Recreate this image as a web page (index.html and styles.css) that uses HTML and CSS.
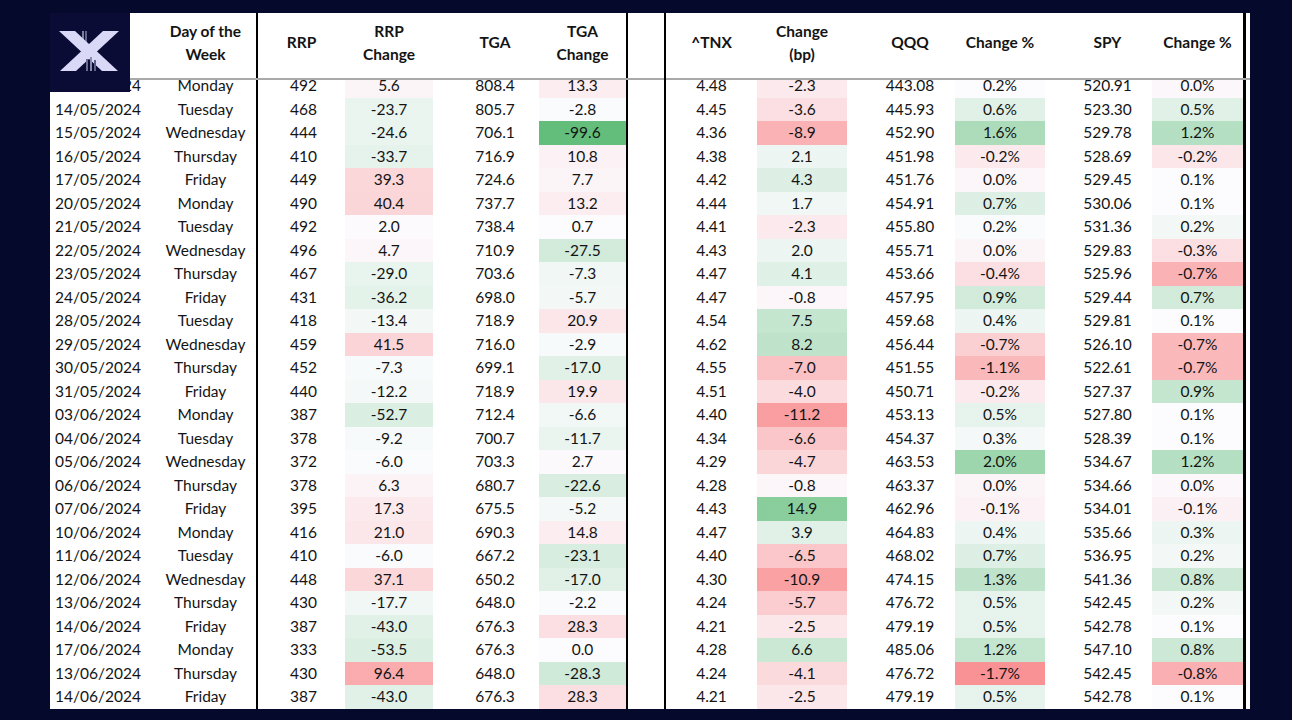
FILE: index.html
```html
<!DOCTYPE html>
<html lang="en">
<head>
<meta charset="utf-8">
<title>RRP / TGA vs Markets</title>
<link rel="stylesheet" href="styles.css">
</head>
<body>
<div class="sheet">
  <div class="logo">
    <svg viewBox="0 0 80 79" width="80" height="79">
      <rect x="32" y="18" width="2" height="13" fill="#7d7f9c"/>
      <rect x="35" y="18" width="2" height="11" fill="#62648a"/>
      <polygon points="9,18 25,18 68,58 52,58" fill="#d9d8f6"/>
      <polygon points="53,18 69,18 26,58 10,58" fill="#d9d8f6"/>
      <rect x="36" y="46" width="2" height="12" fill="#6a6c90"/>
      <rect x="40" y="44" width="2" height="14" fill="#8a8cab"/>
      <rect x="44" y="47" width="2" height="11" fill="#5d5f84"/>
    </svg>
  </div>

  <div class="panel left">
    <div class="row head">
      <div></div><div>Day of the<br>Week</div><div>RRP</div><div>RRP<br>Change</div><div class="sh">TGA</div><div>TGA<br>Change</div>
    </div>
    <div class="body"><div class="rows">
      <div class="row"><div class="date">13/05/2024</div><div>Monday</div><div class="n">492</div><div class="r" style="--a:.05">5.6</div><div class="sh">808.4</div><div class="r" style="--a:.10">13.3</div></div>
      <div class="row"><div class="date">14/05/2024</div><div>Tuesday</div><div class="n">468</div><div class="g" style="--a:.12">-23.7</div><div class="sh">805.7</div><div class="g" style="--a:.02">-2.8</div></div>
      <div class="row"><div class="date">15/05/2024</div><div>Wednesday</div><div class="n">444</div><div class="g" style="--a:.12">-24.6</div><div class="sh">706.1</div><div class="g" style="--a:1">-99.6</div></div>
      <div class="row"><div class="date">16/05/2024</div><div>Thursday</div><div class="n">410</div><div class="g" style="--a:.15">-33.7</div><div class="sh">716.9</div><div class="r" style="--a:.07">10.8</div></div>
      <div class="row"><div class="date">17/05/2024</div><div>Friday</div><div class="n">449</div><div class="r" style="--a:.25">39.3</div><div class="sh">724.6</div><div class="r" style="--a:.05">7.7</div></div>
      <div class="row"><div class="date">20/05/2024</div><div>Monday</div><div class="n">490</div><div class="r" style="--a:.26">40.4</div><div class="sh">737.7</div><div class="r" style="--a:.10">13.2</div></div>
      <div class="row"><div class="date">21/05/2024</div><div>Tuesday</div><div class="n">492</div><div class="r" style="--a:.01">2.0</div><div class="sh">738.4</div><div class="r" style="--a:0">0.7</div></div>
      <div class="row"><div class="date">22/05/2024</div><div>Wednesday</div><div class="n">496</div><div class="r" style="--a:.04">4.7</div><div class="sh">710.9</div><div class="g" style="--a:.28">-27.5</div></div>
      <div class="row"><div class="date">23/05/2024</div><div>Thursday</div><div class="n">467</div><div class="g" style="--a:.13">-29.0</div><div class="sh">703.6</div><div class="g" style="--a:.08">-7.3</div></div>
      <div class="row"><div class="date">24/05/2024</div><div>Friday</div><div class="n">431</div><div class="g" style="--a:.16">-36.2</div><div class="sh">698.0</div><div class="g" style="--a:.06">-5.7</div></div>
      <div class="row"><div class="date">28/05/2024</div><div>Tuesday</div><div class="n">418</div><div class="g" style="--a:.06">-13.4</div><div class="sh">718.9</div><div class="r" style="--a:.15">20.9</div></div>
      <div class="row"><div class="date">29/05/2024</div><div>Wednesday</div><div class="n">459</div><div class="r" style="--a:.27">41.5</div><div class="sh">716.0</div><div class="g" style="--a:.03">-2.9</div></div>
      <div class="row"><div class="date">30/05/2024</div><div>Thursday</div><div class="n">452</div><div class="g" style="--a:.03">-7.3</div><div class="sh">699.1</div><div class="g" style="--a:.18">-17.0</div></div>
      <div class="row"><div class="date">31/05/2024</div><div>Friday</div><div class="n">440</div><div class="g" style="--a:.05">-12.2</div><div class="sh">718.9</div><div class="r" style="--a:.14">19.9</div></div>
      <div class="row"><div class="date">03/06/2024</div><div>Monday</div><div class="n">387</div><div class="g" style="--a:.22">-52.7</div><div class="sh">712.4</div><div class="g" style="--a:.07">-6.6</div></div>
      <div class="row"><div class="date">04/06/2024</div><div>Tuesday</div><div class="n">378</div><div class="g" style="--a:.04">-9.2</div><div class="sh">700.7</div><div class="g" style="--a:.12">-11.7</div></div>
      <div class="row"><div class="date">05/06/2024</div><div>Wednesday</div><div class="n">372</div><div class="g" style="--a:.02">-6.0</div><div class="sh">703.3</div><div class="r" style="--a:.02">2.7</div></div>
      <div class="row"><div class="date">06/06/2024</div><div>Thursday</div><div class="n">378</div><div class="r" style="--a:.06">6.3</div><div class="sh">680.7</div><div class="g" style="--a:.23">-22.6</div></div>
      <div class="row"><div class="date">07/06/2024</div><div>Friday</div><div class="n">395</div><div class="r" style="--a:.12">17.3</div><div class="sh">675.5</div><div class="g" style="--a:.05">-5.2</div></div>
      <div class="row"><div class="date">10/06/2024</div><div>Monday</div><div class="n">416</div><div class="r" style="--a:.14">21.0</div><div class="sh">690.3</div><div class="r" style="--a:.10">14.8</div></div>
      <div class="row"><div class="date">11/06/2024</div><div>Tuesday</div><div class="n">410</div><div class="g" style="--a:.02">-6.0</div><div class="sh">667.2</div><div class="g" style="--a:.24">-23.1</div></div>
      <div class="row"><div class="date">12/06/2024</div><div>Wednesday</div><div class="n">448</div><div class="r" style="--a:.25">37.1</div><div class="sh">650.2</div><div class="g" style="--a:.18">-17.0</div></div>
      <div class="row"><div class="date">13/06/2024</div><div>Thursday</div><div class="n">430</div><div class="g" style="--a:.08">-17.7</div><div class="sh">648.0</div><div class="g" style="--a:.02">-2.2</div></div>
      <div class="row"><div class="date">14/06/2024</div><div>Friday</div><div class="n">387</div><div class="g" style="--a:.18">-43.0</div><div class="sh">676.3</div><div class="r" style="--a:.20">28.3</div></div>
      <div class="row"><div class="date">17/06/2024</div><div>Monday</div><div class="n">333</div><div class="g" style="--a:.22">-53.5</div><div class="sh">676.3</div><div class="r" style="--a:0">0.0</div></div>
      <div class="row"><div class="date">13/06/2024</div><div>Thursday</div><div class="n">430</div><div class="r" style="--a:.55">96.4</div><div class="sh">648.0</div><div class="g" style="--a:.29">-28.3</div></div>
      <div class="row"><div class="date">14/06/2024</div><div>Friday</div><div class="n">387</div><div class="g" style="--a:.18">-43.0</div><div class="sh">676.3</div><div class="r" style="--a:.20">28.3</div></div>
    </div></div>
  </div>

  <div class="gap">
    <div class="gap-head"></div>
  </div>

  <div class="panel right">
    <div class="row head">
      <div>^TNX</div><div>Change<br>(bp)</div><div class="sh">QQQ</div><div>Change %</div><div class="sh">SPY</div><div>Change %</div>
    </div>
    <div class="body"><div class="rows">
      <div class="row"><div>4.48</div><div class="r" style="--a:.12">-2.3</div><div class="sh">443.08</div><div class="g" style="--a:0">0.2%</div><div class="sh">520.91</div><div class="r" style="--a:.03">0.0%</div></div>
      <div class="row"><div>4.45</div><div class="r" style="--a:.20">-3.6</div><div class="sh">445.93</div><div class="g" style="--a:.18">0.6%</div><div class="sh">523.30</div><div class="g" style="--a:.18">0.5%</div></div>
      <div class="row"><div>4.36</div><div class="r" style="--a:.50">-8.9</div><div class="sh">452.90</div><div class="g" style="--a:.52">1.6%</div><div class="sh">529.78</div><div class="g" style="--a:.46">1.2%</div></div>
      <div class="row"><div>4.38</div><div class="g" style="--a:.10">2.1</div><div class="sh">451.98</div><div class="r" style="--a:.12">-0.2%</div><div class="sh">528.69</div><div class="r" style="--a:.15">-0.2%</div></div>
      <div class="row"><div>4.42</div><div class="g" style="--a:.20">4.3</div><div class="sh">451.76</div><div class="r" style="--a:.04">0.0%</div><div class="sh">529.45</div><div class="g" style="--a:0">0.1%</div></div>
      <div class="row"><div>4.44</div><div class="g" style="--a:.08">1.7</div><div class="sh">454.91</div><div class="g" style="--a:.20">0.7%</div><div class="sh">530.06</div><div class="g" style="--a:0">0.1%</div></div>
      <div class="row"><div>4.41</div><div class="r" style="--a:.12">-2.3</div><div class="sh">455.80</div><div class="g" style="--a:.02">0.2%</div><div class="sh">531.36</div><div class="g" style="--a:.06">0.2%</div></div>
      <div class="row"><div>4.43</div><div class="g" style="--a:.10">2.0</div><div class="sh">455.71</div><div class="r" style="--a:.05">0.0%</div><div class="sh">529.83</div><div class="r" style="--a:.20">-0.3%</div></div>
      <div class="row"><div>4.47</div><div class="g" style="--a:.19">4.1</div><div class="sh">453.66</div><div class="r" style="--a:.20">-0.4%</div><div class="sh">525.96</div><div class="r" style="--a:.50">-0.7%</div></div>
      <div class="row"><div>4.47</div><div class="r" style="--a:.04">-0.8</div><div class="sh">457.95</div><div class="g" style="--a:.28">0.9%</div><div class="sh">529.44</div><div class="g" style="--a:.28">0.7%</div></div>
      <div class="row"><div>4.54</div><div class="g" style="--a:.36">7.5</div><div class="sh">459.68</div><div class="g" style="--a:.10">0.4%</div><div class="sh">529.81</div><div class="g" style="--a:0">0.1%</div></div>
      <div class="row"><div>4.62</div><div class="g" style="--a:.40">8.2</div><div class="sh">456.44</div><div class="r" style="--a:.30">-0.7%</div><div class="sh">526.10</div><div class="r" style="--a:.46">-0.7%</div></div>
      <div class="row"><div>4.55</div><div class="r" style="--a:.40">-7.0</div><div class="sh">451.55</div><div class="r" style="--a:.46">-1.1%</div><div class="sh">522.61</div><div class="r" style="--a:.46">-0.7%</div></div>
      <div class="row"><div>4.51</div><div class="r" style="--a:.22">-4.0</div><div class="sh">450.71</div><div class="r" style="--a:.12">-0.2%</div><div class="sh">527.37</div><div class="g" style="--a:.36">0.9%</div></div>
      <div class="row"><div>4.40</div><div class="r" style="--a:.64">-11.2</div><div class="sh">453.13</div><div class="g" style="--a:.14">0.5%</div><div class="sh">527.80</div><div class="g" style="--a:0">0.1%</div></div>
      <div class="row"><div>4.34</div><div class="r" style="--a:.37">-6.6</div><div class="sh">454.37</div><div class="g" style="--a:.05">0.3%</div><div class="sh">528.39</div><div class="g" style="--a:0">0.1%</div></div>
      <div class="row"><div>4.29</div><div class="r" style="--a:.26">-4.7</div><div class="sh">463.53</div><div class="g" style="--a:.62">2.0%</div><div class="sh">534.67</div><div class="g" style="--a:.46">1.2%</div></div>
      <div class="row"><div>4.28</div><div class="r" style="--a:.04">-0.8</div><div class="sh">463.37</div><div class="r" style="--a:.05">0.0%</div><div class="sh">534.66</div><div class="r" style="--a:.03">0.0%</div></div>
      <div class="row"><div>4.43</div><div class="g" style="--a:.75">14.9</div><div class="sh">462.96</div><div class="r" style="--a:.07">-0.1%</div><div class="sh">534.01</div><div class="r" style="--a:.08">-0.1%</div></div>
      <div class="row"><div>4.47</div><div class="g" style="--a:.18">3.9</div><div class="sh">464.83</div><div class="g" style="--a:.10">0.4%</div><div class="sh">535.66</div><div class="g" style="--a:.10">0.3%</div></div>
      <div class="row"><div>4.40</div><div class="r" style="--a:.36">-6.5</div><div class="sh">468.02</div><div class="g" style="--a:.20">0.7%</div><div class="sh">536.95</div><div class="g" style="--a:.06">0.2%</div></div>
      <div class="row"><div>4.30</div><div class="r" style="--a:.62">-10.9</div><div class="sh">474.15</div><div class="g" style="--a:.40">1.3%</div><div class="sh">541.36</div><div class="g" style="--a:.31">0.8%</div></div>
      <div class="row"><div>4.24</div><div class="r" style="--a:.32">-5.7</div><div class="sh">476.72</div><div class="g" style="--a:.14">0.5%</div><div class="sh">542.45</div><div class="g" style="--a:.06">0.2%</div></div>
      <div class="row"><div>4.21</div><div class="r" style="--a:.14">-2.5</div><div class="sh">479.19</div><div class="g" style="--a:.14">0.5%</div><div class="sh">542.78</div><div class="g" style="--a:0">0.1%</div></div>
      <div class="row"><div>4.28</div><div class="g" style="--a:.32">6.6</div><div class="sh">485.06</div><div class="g" style="--a:.37">1.2%</div><div class="sh">547.10</div><div class="g" style="--a:.31">0.8%</div></div>
      <div class="row"><div>4.24</div><div class="r" style="--a:.23">-4.1</div><div class="sh">476.72</div><div class="r" style="--a:.72">-1.7%</div><div class="sh">542.45</div><div class="r" style="--a:.52">-0.8%</div></div>
      <div class="row"><div>4.21</div><div class="r" style="--a:.14">-2.5</div><div class="sh">479.19</div><div class="g" style="--a:.14">0.5%</div><div class="sh">542.78</div><div class="g" style="--a:0">0.1%</div></div>
    </div></div>
  </div>

  <div class="tail">
    <div class="gap-head"></div>
  </div>
</div>
</body>
</html>
```

FILE: styles.css
```css
* { box-sizing: border-box; }

html, body {
  margin: 0;
  background: #050a2d;
}

body {
  padding: 13px 0 0 50px;
  font-family: Lato, "Liberation Sans", sans-serif;
  font-size: 15.5px;
  color: #141414;
}

.sheet {
  position: relative;
  display: flex;
  width: 1200px;
  height: 695.5px;
  background: #fff;
}

.logo {
  position: absolute;
  left: 0;
  top: 0;
  width: 80px;
  height: 79px;
  background: #0a0c36;
  z-index: 2;
}

.logo svg { display: block; }

.panel {
  display: flex;
  flex-direction: column;
}

.left { width: 578px; }
.right { width: 580px; }

.row {
  display: grid;
  height: 23.5px;
  line-height: 23.5px;
  text-align: center;
  white-space: nowrap;
}

.left .row { grid-template-columns: 105px 103px 87px 88px 106px 89px; }
.right .row { grid-template-columns: 91px 90px 108px 90px 107px 94px; }

.left .row > :nth-child(2),
.left .row > :last-child { border-right: 2px solid #000; }
.right .row > :last-child { border-right: 3px solid #000; }

.row.head {
  height: 67px;
  line-height: 23px;
  font-weight: 700;
  border-bottom: 2px solid #a9a9a9;
  align-items: stretch;
}

.row.head > div {
  display: flex;
  align-items: center;
  justify-content: center;
  padding-bottom: 6px;
}

.row.head > .sh { padding-left: 18px; }

.body {
  height: 628.5px;
  overflow: hidden;
}

.rows { margin-top: -6px; }

.date {
  text-align: left;
  padding-left: 5px;
}

.n { padding-left: 4px; }
.sh { padding-left: 18px; }

.g, .r { background-color: #fcfcff; }
.g { background-image: linear-gradient(rgba(99, 190, 123, var(--a)), rgba(99, 190, 123, var(--a))); }
.r { background-image: linear-gradient(rgba(248, 105, 107, var(--a)), rgba(248, 105, 107, var(--a))); }

.gap {
  width: 38px;
  border-right: 2px solid #000;
}

.tail { width: 4px; }

.gap-head {
  height: 67px;
  border-bottom: 2px solid #a9a9a9;
}
```
